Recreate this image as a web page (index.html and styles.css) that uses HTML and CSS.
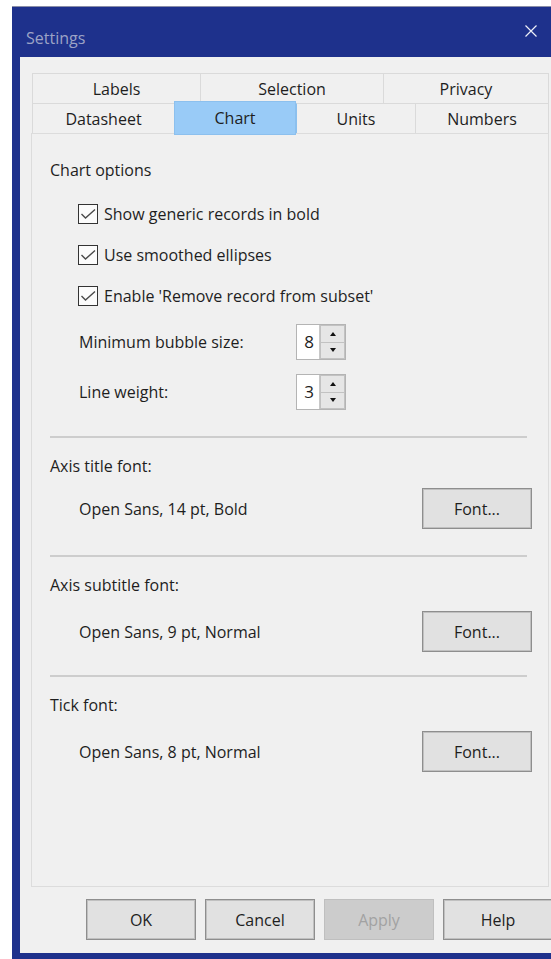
FILE: index.html
```html
<!DOCTYPE html>
<html lang="en">
<head>
<meta charset="utf-8">
<title>Settings</title>
<link rel="stylesheet" href="styles.css">
</head>
<body>
<div class="window">
  <div class="titlebar">
    <span class="title">Settings</span>
    <button class="close" aria-label="Close">
      <svg width="12" height="12" viewBox="0 0 12 12"><path d="M0.5 0.5 L11.5 11.5 M11.5 0.5 L0.5 11.5" stroke="#eef0f8" stroke-width="1.2" fill="none"/></svg>
    </button>
  </div>
  <div class="client">
    <div class="tabs">
      <div class="tab-row">
        <div class="tab w-labels">Labels</div>
        <div class="tab w-selection">Selection</div>
        <div class="tab w-privacy">Privacy</div>
      </div>
      <div class="tab-row">
        <div class="tab w-datasheet">Datasheet</div>
        <div class="tab w-chart selected">Chart</div>
        <div class="tab w-units">Units</div>
        <div class="tab w-numbers">Numbers</div>
      </div>
    </div>

    <div class="panel">
      <div class="heading">Chart options</div>

      <div class="checks">
        <label class="check"><span class="box"><svg width="18" height="18" viewBox="0 0 18 18"><polyline points="2.5,9 6.5,13 16,4.5" fill="none" stroke="#4a4a4a" stroke-width="1.4"/></svg></span>Show generic records in bold</label>
        <label class="check"><span class="box"><svg width="18" height="18" viewBox="0 0 18 18"><polyline points="2.5,9 6.5,13 16,4.5" fill="none" stroke="#4a4a4a" stroke-width="1.4"/></svg></span>Use smoothed ellipses</label>
        <label class="check"><span class="box"><svg width="18" height="18" viewBox="0 0 18 18"><polyline points="2.5,9 6.5,13 16,4.5" fill="none" stroke="#4a4a4a" stroke-width="1.4"/></svg></span>Enable 'Remove record from subset'</label>
      </div>

      <div class="spins">
        <div class="spin-row">
          <span class="spin-label">Minimum bubble size:</span>
          <div class="spinner">
            <span class="spin-value">8</span>
            <div class="spin-btns">
              <span class="spin-btn"><span class="arrow-up"></span></span>
              <span class="spin-btn"><span class="arrow-down"></span></span>
            </div>
          </div>
        </div>
        <div class="spin-row">
          <span class="spin-label">Line weight:</span>
          <div class="spinner">
            <span class="spin-value">3</span>
            <div class="spin-btns">
              <span class="spin-btn"><span class="arrow-up"></span></span>
              <span class="spin-btn"><span class="arrow-down"></span></span>
            </div>
          </div>
        </div>
      </div>

      <div class="sep sep-1"></div>
      <div class="section-label">Axis title font:</div>
      <div class="font-row row-1">
        <span>Open Sans, 14 pt, Bold</span>
        <button class="btn">Font...</button>
      </div>

      <div class="sep sep-2"></div>
      <div class="section-label">Axis subtitle font:</div>
      <div class="font-row row-2">
        <span>Open Sans, 9 pt, Normal</span>
        <button class="btn">Font...</button>
      </div>

      <div class="sep sep-3"></div>
      <div class="section-label">Tick font:</div>
      <div class="font-row row-3">
        <span>Open Sans, 8 pt, Normal</span>
        <button class="btn">Font...</button>
      </div>
    </div>

    <div class="actions">
      <button class="btn">OK</button>
      <button class="btn">Cancel</button>
      <button class="btn" disabled>Apply</button>
      <button class="btn">Help</button>
    </div>
  </div>
</div>
</body>
</html>
```

FILE: styles.css
```css
html, body {
  margin: 0;
  padding: 0;
  overflow: hidden;
  background: #ffffff;
}

body {
  font-family: "Open Sans", "Noto Sans", sans-serif;
  font-size: 16px;
  color: #1e1e1e;
}

/* dialog frame */
.window {
  width: 534px;
  margin: 6px 0 0 12px;
  padding: 0 8px 6px 8px;
  border-top: 1px solid #8a8ea8;
  background: #1e318c;
}

.titlebar {
  display: flex;
  align-items: flex-start;
  height: 50px;
  margin: 0 -8px;
  padding-left: 14px;
}

.title {
  margin-top: 20px;
  font-size: 16px;
  line-height: 22px;
  color: #9ca3c6;
}

.close {
  margin-left: auto;
  margin-right: 8px;
  width: 46px;
  height: 50px;
  padding: 18px 0 0 0;
  border: 0;
  background: transparent;
  display: flex;
  justify-content: center;
  align-items: flex-start;
}

.client {
  height: 896px;
  box-sizing: border-box;
  padding: 16px 0 0 11px;
  background: #f0f0f0;
}

/* tab strip */
.tabs {
  margin-left: 1px;
}

.tab-row {
  display: flex;
  height: 30px;
}

.tab {
  box-sizing: border-box;
  height: 30px;
  border-top: 1px solid #dadada;
  border-left: 1px solid #dadada;
  display: flex;
  align-items: center;
  justify-content: center;
  line-height: 20px;
}

.tab:last-child {
  border-right: 1px solid #dadada;
}

.w-labels { width: 168px; }
.w-selection { width: 183px; }
.w-privacy { width: 166px; }
.w-datasheet { width: 142px; }
.w-chart { width: 122px; }
.w-units { width: 119px; }
.w-numbers { width: 134px; }

.tab.selected {
  position: relative;
  z-index: 1;
  height: 34px;
  margin: -2px 0 -2px 0;
  background: #99cbf7;
  border: 1px solid #8cc0ee;
}

.tab.selected + .tab {
  border-left-color: #8cc0ee;
}

/* page body */
.panel {
  box-sizing: border-box;
  width: 518px;
  height: 754px;
  border: 1px solid #dcdcdc;
  padding: 26px 0 0 18px;
}

.heading {
  line-height: 20px;
}

.checks {
  display: flex;
  flex-direction: column;
  gap: 21px;
  margin-top: 24px;
  padding-left: 28px;
}

.check {
  display: flex;
  align-items: center;
  height: 20px;
  line-height: 20px;
}

.box {
  box-sizing: border-box;
  width: 20px;
  height: 20px;
  border: 1px solid #333333;
  background: #fbfbfb;
  margin-right: 6px;
  display: flex;
  align-items: center;
  justify-content: center;
}

.spins {
  display: flex;
  flex-direction: column;
  gap: 14px;
  margin-top: 18px;
  padding-left: 29px;
}

.spin-row {
  display: flex;
  align-items: center;
  height: 36px;
}

.spin-label {
  width: 217px;
}

.spinner {
  box-sizing: border-box;
  display: flex;
  width: 50px;
  height: 36px;
  border: 1px solid #b4b4b4;
  background: #ffffff;
}

.spin-value {
  width: 22px;
  font-size: 17px;
  line-height: 34px;
  text-align: center;
  padding-left: 2px;
  box-sizing: border-box;
}

.spin-btns {
  display: flex;
  flex-direction: column;
  flex: 1;
  border-left: 1px solid #c8c8c8;
}

.spin-btn {
  flex: 1;
  display: flex;
  align-items: center;
  justify-content: center;
  background: #e6e6e6;
  border: 1px solid #c2c2c2;
}

.spin-btn + .spin-btn {
  border-top: 0;
}

.arrow-up {
  width: 0;
  height: 0;
  border-left: 3.5px solid transparent;
  border-right: 3.5px solid transparent;
  border-bottom: 4px solid #111111;
}

.arrow-down {
  width: 0;
  height: 0;
  border-left: 3.5px solid transparent;
  border-right: 3.5px solid transparent;
  border-top: 4px solid #111111;
}

/* etched separators and font sections */
.sep {
  width: 477px;
  height: 2px;
  background: #cdcdcd;
}

.sep-1 { margin-top: 26px; }
.sep-2 { margin-top: 26px; }
.sep-3 { margin-top: 23px; }

.section-label {
  margin-top: 18px;
  line-height: 20px;
}

.font-row {
  display: flex;
  align-items: center;
  justify-content: space-between;
  width: 453px;
  margin-left: 29px;
}

.row-1 { margin-top: 12px; }
.row-2 { margin-top: 16px; }
.row-3 { margin-top: 16px; }

.btn {
  box-sizing: border-box;
  width: 110px;
  height: 41px;
  border: 1px solid #8e8e8e;
  box-shadow: inset 0 0 0 1px #c0c0c0;
  background: #e1e1e1;
  font-family: "Open Sans", "Noto Sans", sans-serif;
  font-size: 16px;
  color: #1e1e1e;
  padding: 0;
}

.btn:disabled {
  background: #cccccc;
  border-color: #bfbfbf;
  box-shadow: none;
  color: #a2a2a2;
}

/* dialog buttons */
.actions {
  display: flex;
  gap: 9px;
  margin: 12px 0 0 55px;
}
```
